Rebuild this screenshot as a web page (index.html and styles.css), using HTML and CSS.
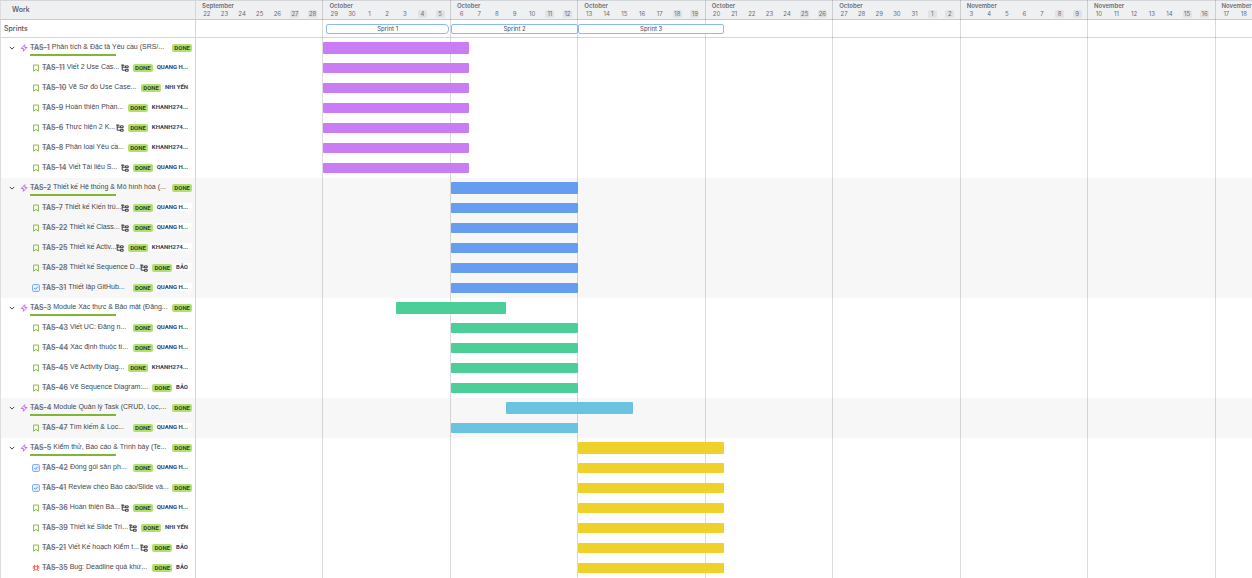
FILE: index.html
```html
<!DOCTYPE html>
<html lang="vi">
<head>
<meta charset="utf-8">
<title>Timeline</title>
<link rel="stylesheet" href="styles.css">
</head>
<body>
<svg class="defs" aria-hidden="true">
<symbol id="chevron" viewBox="0 0 8 8"><path d="M1.8 2.9 4 5.1 6.2 2.9" fill="none" stroke="#44474f"/></symbol>
<symbol id="epic" viewBox="0 0 8 8"><path d="M4.8.7 1.2 4.5H3.4V7.3L7 3.5H4.8Z" fill="none" stroke="#c26df0" stroke-width="1" stroke-linejoin="round"/></symbol>
<symbol id="story" viewBox="0 0 8 8"><path d="M1.6 1h4.8v6.2L4 5.4 1.6 7.2Z" fill="none" stroke="#88bb45" stroke-width="1" stroke-linejoin="round"/></symbol>
<symbol id="task" viewBox="0 0 8 8"><rect x=".6" y=".6" width="6.8" height="6.8" rx="1" fill="#e9f2fe" stroke="#6ba0f5" stroke-width=".9"/><path d="m2.3 4.1 1.2 1.2 2.3-2.6" fill="none" stroke="#3f7fe6" stroke-width=".9"/></symbol>
<symbol id="bug" viewBox="0 0 8 8"><path d="M2.4 2.2h3.2v3.6H2.4ZM2.4 2.2V.8M5.6 2.2V.8M2.4 4H.6M5.6 4h1.8M2.4 5.6 1.2 7M5.6 5.6 6.8 7M2.4 2.6H.8M5.6 2.6h1.6" fill="none" stroke="#ee5547" stroke-width=".9"/></symbol>
<symbol id="tree" viewBox="0 0 8 8"><path d="M.3 1h2.6v1.2M1.2 1v5.2h3.2M1.2 3.2h3.2M4.5 1.9h2.7v1.8H4.5ZM4.5 5.3h2.7v1.9H4.5Z" fill="none" stroke="#292a2e" stroke-width=".9"/></symbol>
</svg>
<main class="timeline">
<header class="head">
<div class="side head-label">Work</div>
<div class="weeks">
<div class="week"><strong>September</strong><div class="days"><span>22</span><span>23</span><span>24</span><span>25</span><span>26</span><span class="off">27</span><span class="off">28</span></div></div>
<div class="week"><strong>October</strong><div class="days"><span>29</span><span>30</span><span>1</span><span>2</span><span>3</span><span class="off">4</span><span class="off">5</span></div></div>
<div class="week"><strong>October</strong><div class="days"><span>6</span><span>7</span><span>8</span><span>9</span><span>10</span><span class="off">11</span><span class="off">12</span></div></div>
<div class="week"><strong>October</strong><div class="days"><span>13</span><span>14</span><span>15</span><span>16</span><span>17</span><span class="off">18</span><span class="off">19</span></div></div>
<div class="week"><strong>October</strong><div class="days"><span>20</span><span>21</span><span>22</span><span>23</span><span>24</span><span class="off">25</span><span class="off">26</span></div></div>
<div class="week"><strong>October</strong><div class="days"><span>27</span><span>28</span><span>29</span><span>30</span><span>31</span><span class="off">1</span><span class="off">2</span></div></div>
<div class="week"><strong>November</strong><div class="days"><span>3</span><span>4</span><span>5</span><span>6</span><span>7</span><span class="off">8</span><span class="off">9</span></div></div>
<div class="week"><strong>November</strong><div class="days"><span>10</span><span>11</span><span>12</span><span>13</span><span>14</span><span class="off">15</span><span class="off">16</span></div></div>
<div class="week"><strong>November</strong><div class="days"><span>17</span><span>18</span></div></div>
</div>
</header>
<div class="sprints">
<div class="side sprints-label">Sprints</div>
<div class="track">
<button class="sprint done" style="--from:7;--days:7">Sprint 1</button>
<button class="sprint" style="--from:14;--days:7">Sprint 2</button>
<button class="sprint" style="--from:21;--days:8">Sprint 3</button>
</div>
</div>
<div class="lines" aria-hidden="true"><i></i><i></i><i></i><i></i><i></i><i></i><i></i><i></i><i></i></div>

<section class="group purple">
<div class="row epic"><div class="side"><button class="toggle" aria-label="Collapse TAS-1"><svg><use href="#chevron"/></svg></button><svg><use href="#epic"/></svg><a class="key" href="#TAS-1">TAS-1</a><span class="title">Phân tích &amp; Đặc tả Yêu cầu (SRS/...</span><b class="status">DONE</b></div><div class="track"><span class="bar" style="--from:7;--days:8"></span></div></div>
<div class="row"><div class="side"><svg><use href="#story"/></svg><a class="key" href="#TAS-11">TAS-11</a><span class="title">Viết 2 Use Cas...</span><svg class="tree"><use href="#tree"/></svg><b class="status">DONE</b><span class="who">QUANG H...</span></div><div class="track"><span class="bar" style="--from:7;--days:8"></span></div></div>
<div class="row"><div class="side"><svg><use href="#story"/></svg><a class="key" href="#TAS-10">TAS-10</a><span class="title">Vẽ Sơ đồ Use Case...</span><b class="status">DONE</b><span class="who">NHI YẾN</span></div><div class="track"><span class="bar" style="--from:7;--days:8"></span></div></div>
<div class="row"><div class="side"><svg><use href="#story"/></svg><a class="key" href="#TAS-9">TAS-9</a><span class="title">Hoàn thiện Phần...</span><b class="status">DONE</b><span class="who">KHANH274...</span></div><div class="track"><span class="bar" style="--from:7;--days:8"></span></div></div>
<div class="row"><div class="side"><svg><use href="#story"/></svg><a class="key" href="#TAS-6">TAS-6</a><span class="title">Thực hiện 2 K...</span><svg class="tree"><use href="#tree"/></svg><b class="status">DONE</b><span class="who">KHANH274...</span></div><div class="track"><span class="bar" style="--from:7;--days:8"></span></div></div>
<div class="row"><div class="side"><svg><use href="#story"/></svg><a class="key" href="#TAS-8">TAS-8</a><span class="title">Phân loại Yêu cầ...</span><b class="status">DONE</b><span class="who">KHANH274...</span></div><div class="track"><span class="bar" style="--from:7;--days:8"></span></div></div>
<div class="row"><div class="side"><svg><use href="#story"/></svg><a class="key" href="#TAS-14">TAS-14</a><span class="title">Viết Tài liệu S...</span><svg class="tree"><use href="#tree"/></svg><b class="status">DONE</b><span class="who">QUANG H...</span></div><div class="track"><span class="bar" style="--from:7;--days:8"></span></div></div>
</section>

<section class="group blue">
<div class="row epic"><div class="side"><button class="toggle" aria-label="Collapse TAS-2"><svg><use href="#chevron"/></svg></button><svg><use href="#epic"/></svg><a class="key" href="#TAS-2">TAS-2</a><span class="title">Thiết kế Hệ thống &amp; Mô hình hóa (...</span><b class="status">DONE</b></div><div class="track"><span class="bar" style="--from:14;--days:7"></span></div></div>
<div class="row"><div class="side"><svg><use href="#story"/></svg><a class="key" href="#TAS-7">TAS-7</a><span class="title">Thiết kế Kiến trú...</span><svg class="tree"><use href="#tree"/></svg><b class="status">DONE</b><span class="who">QUANG H...</span></div><div class="track"><span class="bar" style="--from:14;--days:7"></span></div></div>
<div class="row"><div class="side"><svg><use href="#story"/></svg><a class="key" href="#TAS-22">TAS-22</a><span class="title">Thiết kế Class...</span><svg class="tree"><use href="#tree"/></svg><b class="status">DONE</b><span class="who">QUANG H...</span></div><div class="track"><span class="bar" style="--from:14;--days:7"></span></div></div>
<div class="row"><div class="side"><svg><use href="#story"/></svg><a class="key" href="#TAS-25">TAS-25</a><span class="title">Thiết kế Activ...</span><svg class="tree"><use href="#tree"/></svg><b class="status">DONE</b><span class="who">KHANH274...</span></div><div class="track"><span class="bar" style="--from:14;--days:7"></span></div></div>
<div class="row"><div class="side"><svg><use href="#story"/></svg><a class="key" href="#TAS-28">TAS-28</a><span class="title">Thiết kế Sequence D...</span><svg class="tree"><use href="#tree"/></svg><b class="status">DONE</b><span class="who">BẢO</span></div><div class="track"><span class="bar" style="--from:14;--days:7"></span></div></div>
<div class="row"><div class="side"><svg><use href="#task"/></svg><a class="key" href="#TAS-31">TAS-31</a><span class="title">Thiết lập GitHub...</span><b class="status">DONE</b><span class="who">QUANG H...</span></div><div class="track"><span class="bar" style="--from:14;--days:7"></span></div></div>
</section>

<section class="group green">
<div class="row epic"><div class="side"><button class="toggle" aria-label="Collapse TAS-3"><svg><use href="#chevron"/></svg></button><svg><use href="#epic"/></svg><a class="key" href="#TAS-3">TAS-3</a><span class="title">Module Xác thực &amp; Bảo mật (Đăng...</span><b class="status">DONE</b></div><div class="track"><span class="bar" style="--from:11;--days:6"></span></div></div>
<div class="row"><div class="side"><svg><use href="#story"/></svg><a class="key" href="#TAS-43">TAS-43</a><span class="title">Viết UC: Đăng n...</span><b class="status">DONE</b><span class="who">QUANG H...</span></div><div class="track"><span class="bar" style="--from:14;--days:7"></span></div></div>
<div class="row"><div class="side"><svg><use href="#story"/></svg><a class="key" href="#TAS-44">TAS-44</a><span class="title">Xác định thuộc tí...</span><b class="status">DONE</b><span class="who">QUANG H...</span></div><div class="track"><span class="bar" style="--from:14;--days:7"></span></div></div>
<div class="row"><div class="side"><svg><use href="#story"/></svg><a class="key" href="#TAS-45">TAS-45</a><span class="title">Vẽ Activity Diag...</span><b class="status">DONE</b><span class="who">KHANH274...</span></div><div class="track"><span class="bar" style="--from:14;--days:7"></span></div></div>
<div class="row"><div class="side"><svg><use href="#story"/></svg><a class="key" href="#TAS-46">TAS-46</a><span class="title">Vẽ Sequence Diagram:...</span><b class="status">DONE</b><span class="who">BẢO</span></div><div class="track"><span class="bar" style="--from:14;--days:7"></span></div></div>
</section>

<section class="group teal">
<div class="row epic"><div class="side"><button class="toggle" aria-label="Collapse TAS-4"><svg><use href="#chevron"/></svg></button><svg><use href="#epic"/></svg><a class="key" href="#TAS-4">TAS-4</a><span class="title">Module Quản lý Task (CRUD, Lọc,...</span><b class="status">DONE</b></div><div class="track"><span class="bar" style="--from:17;--days:7"></span></div></div>
<div class="row"><div class="side"><svg><use href="#story"/></svg><a class="key" href="#TAS-47">TAS-47</a><span class="title">Tìm kiếm &amp; Lọc...</span><b class="status">DONE</b><span class="who">QUANG H...</span></div><div class="track"><span class="bar" style="--from:14;--days:7"></span></div></div>
</section>

<section class="group yellow">
<div class="row epic"><div class="side"><button class="toggle" aria-label="Collapse TAS-5"><svg><use href="#chevron"/></svg></button><svg><use href="#epic"/></svg><a class="key" href="#TAS-5">TAS-5</a><span class="title">Kiểm thử, Báo cáo &amp; Trình bày (Te...</span><b class="status">DONE</b></div><div class="track"><span class="bar" style="--from:21;--days:8"></span></div></div>
<div class="row"><div class="side"><svg><use href="#task"/></svg><a class="key" href="#TAS-42">TAS-42</a><span class="title">Đóng gói sản ph...</span><b class="status">DONE</b><span class="who">QUANG H...</span></div><div class="track"><span class="bar" style="--from:21;--days:8"></span></div></div>
<div class="row"><div class="side"><svg><use href="#task"/></svg><a class="key" href="#TAS-41">TAS-41</a><span class="title">Review chéo Báo cáo/Slide và...</span><b class="status">DONE</b></div><div class="track"><span class="bar" style="--from:21;--days:8"></span></div></div>
<div class="row"><div class="side"><svg><use href="#story"/></svg><a class="key" href="#TAS-36">TAS-36</a><span class="title">Hoàn thiện Bá...</span><svg class="tree"><use href="#tree"/></svg><b class="status">DONE</b><span class="who">QUANG H...</span></div><div class="track"><span class="bar" style="--from:21;--days:8"></span></div></div>
<div class="row"><div class="side"><svg><use href="#story"/></svg><a class="key" href="#TAS-39">TAS-39</a><span class="title">Thiết kế Slide Trì...</span><svg class="tree"><use href="#tree"/></svg><b class="status">DONE</b><span class="who">NHI YẾN</span></div><div class="track"><span class="bar" style="--from:21;--days:8"></span></div></div>
<div class="row"><div class="side"><svg><use href="#story"/></svg><a class="key" href="#TAS-21">TAS-21</a><span class="title">Viết Kế hoạch Kiểm t...</span><svg class="tree"><use href="#tree"/></svg><b class="status">DONE</b><span class="who">BẢO</span></div><div class="track"><span class="bar" style="--from:21;--days:8"></span></div></div>
<div class="row"><div class="side"><svg><use href="#bug"/></svg><a class="key" href="#TAS-35">TAS-35</a><span class="title">Bug: Deadline quá khứ...</span><b class="status">DONE</b><span class="who">BẢO</span></div><div class="track"><span class="bar" style="--from:21;--days:8"></span></div></div>
</section>
</main>
</body>
</html>
```

FILE: styles.css
```css
* { box-sizing: border-box; }

body {
  margin: 0;
  background: #fff;
  color: #44474f;
  font: 7px/10px "Liberation Sans", Arial, sans-serif;
}

button {
  margin: 0;
  padding: 0;
  border: 0;
  background: none;
  color: inherit;
  font: inherit;
}

svg {
  display: block;
  flex: none;
  width: 8px;
  height: 8px;
}

.defs { position: absolute; width: 0; height: 0; }

.timeline { position: relative; }

.head, .sprints, .row {
  display: grid;
  grid-template-columns: 196px minmax(0, 1fr);
}

.side {
  display: flex;
  align-items: center;
  min-width: 0;
  padding: 0 3px 0 32px;
  border-right: 1px solid #d5d6d9;
  border-left: 1px solid #dddee1;
}

.head {
  height: 20px;
  background: #eff0f2;
  border-top: 1px solid #d5d6d9;
  border-bottom: 1px solid #c9cacd;
}

.side.head-label { padding-left: 11px; }
.side.sprints-label { padding-left: 3px; }

.head-label, .sprints-label {
  color: #505258;
  font-family: Inter, sans-serif;
  font-weight: 500;
}

/* The visible range is 58 days: eight full weeks and two days. */
.weeks, .lines {
  display: grid;
  grid-template-columns: repeat(9, calc(100% * 7 / 58));
  overflow: hidden;
}

.week {
  display: flex;
  flex-direction: column;
  padding: 1px 2px 0;
  color: #6b6e76;
  font: 6px/8px Inter, sans-serif;
}

.week strong { padding-left: 4px; font-weight: 600; }

.days {
  display: grid;
  grid-template-columns: repeat(7, 1fr);
  justify-items: center;
}

.off {
  min-width: 9px;
  border-radius: 2px;
  background: #e1e2e5;
  text-align: center;
}

.sprints {
  height: 18px;
  border-bottom: 1px solid #d5d6d9;
}

.lines {
  position: absolute;
  inset: 0 0 0 196px;
  pointer-events: none;
}

.lines i { border-right: 1px solid rgba(0, 0, 0, .14); }

.track {
  display: grid;
  grid-template-columns: repeat(58, minmax(0, 1fr));
  align-items: center;
}

.sprint {
  position: relative;
  z-index: 1;
  grid-area: 1 / calc(var(--from) + 1) / auto / span var(--days);
  height: 10px;
  border: 1px solid #8fb8f6;
  border-radius: 2px;
  background: #fff;
  font: 6px/8px Inter, sans-serif;
}

.sprint.done {
  margin: 0 2px 0 3px;
  border-radius: 2px 4px 4px 2px;
}

.row { height: 20px; }
.group:nth-of-type(even) { background: #f7f7f7; }
.epic .side { position: relative; padding-left: 7px; }
.toggle { margin-right: 4px; }

.epic .side::after {
  content: "";
  position: absolute;
  bottom: 2px;
  left: 29px;
  width: 86px;
  height: 2px;
  background: #82b536;
}

.key {
  margin: 0 2px;
  color: #6b6e76;
  font: 600 7px/10px Inter, sans-serif;
  text-decoration: line-through rgba(107, 110, 118, .3);
}

.title {
  flex: 1;
  min-width: 0;
  padding-bottom: 2px;
  white-space: nowrap;
}

.side svg { margin-left: -1px; }
.toggle svg, .epic .side > svg { margin-left: 0; }
.side .tree { margin: 0 4px 0 0; }

.status {
  flex: none;
  padding: 0 2px;
  border-radius: 2px;
  background: #b3df72;
  color: #37471f;
  font: 700 6px/8px Roboto, sans-serif;
}

.who {
  flex: none;
  margin-left: 2px;
  padding: 0 4px 0 2px;
  border-radius: 2px;
  background: #fff;
  color: #2c3e63;
  font: 700 6px/8px Roboto, sans-serif;
}

.row .who { margin-bottom: 2px; }

.bar {
  position: relative;
  z-index: 1;
  grid-column: calc(var(--from) + 1) / span var(--days);
  height: 10px;
  border-radius: 1px;
}

.epic .bar { height: 12px; }
.purple .bar { background: #c97cf4; }
.blue .bar { background: #669df1; }
.green .bar { background: #4bce97; }
.teal .bar { background: #6cc3e0; }
.yellow .bar { background: #eed12b; }
```
